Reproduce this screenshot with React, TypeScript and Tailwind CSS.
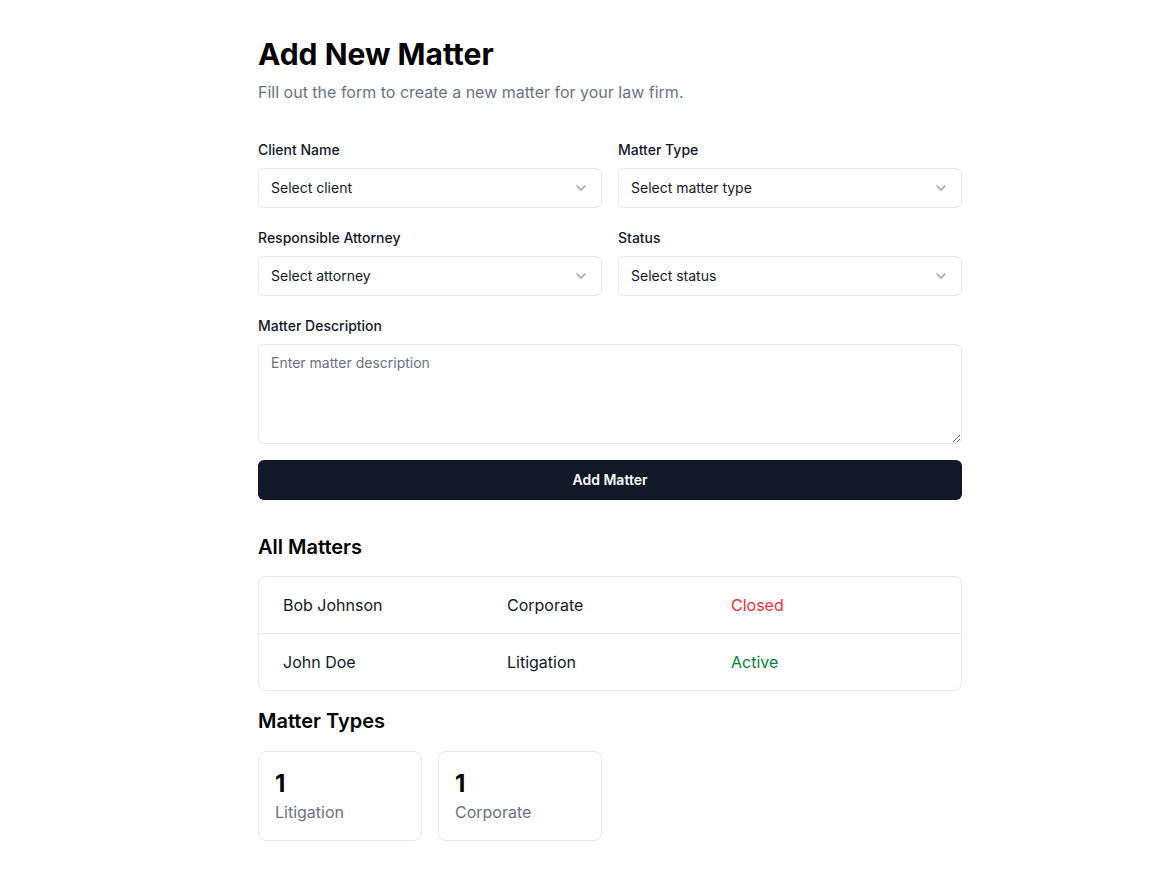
import React from "react";
import { ChevronDown } from "lucide-react";

function SelectBox({ placeholder }: { placeholder: string }) {
  return (
    <button
      type="button"
      className="flex h-10 w-full items-center justify-between rounded-md border border-gray-200 bg-white px-3 text-sm text-gray-900"
    >
      <span>{placeholder}</span>
      <ChevronDown className="h-4 w-4 text-gray-500 opacity-70" strokeWidth={2} />
    </button>
  );
}

function Field({ label, placeholder }: { label: string; placeholder: string }) {
  return (
    <div className="flex flex-col gap-2">
      <label className="text-sm font-medium leading-5 text-gray-900">{label}</label>
      <SelectBox placeholder={placeholder} />
    </div>
  );
}

export default function App() {
  const matters = [
    { client: "Bob Johnson", type: "Corporate", status: "Closed" },
    { client: "John Doe", type: "Litigation", status: "Active" },
  ];
  return (
    <div
      className="min-h-screen bg-white text-gray-950"
      style={{ fontFamily: "Inter, 'Noto Sans', sans-serif" }}
    >
      <div className="ml-[258px] w-[704px] pt-[36px] pb-10">
        <h1 className="text-3xl font-bold leading-9 text-black">Add New Matter</h1>
        <p className="mt-2 text-base leading-6 text-gray-500">
          Fill out the form to create a new matter for your law firm.
        </p>

        <div className="mt-[36px] grid grid-cols-2 gap-x-4 gap-y-5">
          <Field label="Client Name" placeholder="Select client" />
          <Field label="Matter Type" placeholder="Select matter type" />
          <Field label="Responsible Attorney" placeholder="Select attorney" />
          <Field label="Status" placeholder="Select status" />
        </div>

        <div className="mt-5 flex flex-col gap-2">
          <label className="text-sm font-medium leading-5 text-gray-900">Matter Description</label>
          <textarea
            placeholder="Enter matter description"
            className="h-[100px] w-full rounded-md border border-gray-200 px-3 py-2 text-sm leading-5 placeholder:text-gray-500 outline-none"
          />
        </div>

        <button
          type="button"
          className="mt-4 flex h-10 w-full items-center justify-center rounded-md bg-[#111827] text-sm font-semibold text-white"
        >
          Add Matter
        </button>

        <h2 className="mt-[33px] text-xl font-semibold leading-7 text-black">All Matters</h2>
        <div className="mt-[15px] overflow-hidden rounded-lg border border-gray-200">
          {matters.map((m, i) => (
            <div
              key={m.client}
              className={
                "grid grid-cols-[224px_224px_1fr] items-center px-6 text-base " +
                (i > 0 ? "h-[57px] border-t border-gray-200" : "h-[56px]")
              }
            >
              <span className="text-gray-900">{m.client}</span>
              <span className="text-gray-900">{m.type}</span>
              <span className={m.status === "Closed" ? "text-red-500" : "text-green-700"}>
                {m.status}
              </span>
            </div>
          ))}
        </div>

        <h2 className="mt-4 text-xl font-semibold leading-7 text-black">Matter Types</h2>
        <div className="mt-4 flex gap-4">
          {[
            { n: 1, label: "Litigation" },
            { n: 1, label: "Corporate" },
          ].map((c) => (
            <div
              key={c.label}
              className="flex h-[90px] w-[164px] flex-col justify-center rounded-lg border border-gray-200 px-4"
            >
              <span className="text-2xl font-bold leading-8 text-black">{c.n}</span>
              <span className="text-base leading-6 text-gray-500">{c.label}</span>
            </div>
          ))}
        </div>
      </div>
    </div>
  );
}
